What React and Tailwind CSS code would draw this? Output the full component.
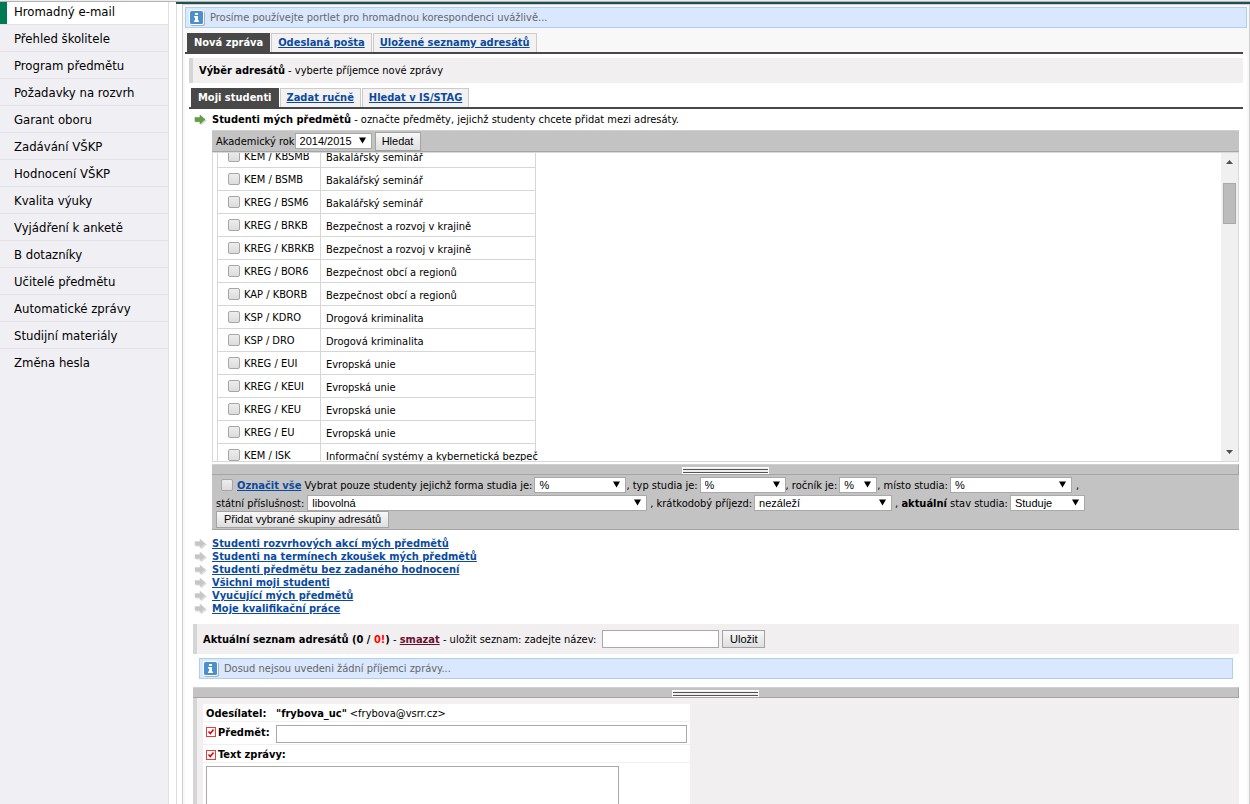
import React, { useState } from "react";

const menuItems = [
  "Hromadný e-mail",
  "Přehled školitele",
  "Program předmětu",
  "Požadavky na rozvrh",
  "Garant oboru",
  "Zadávání VŠKP",
  "Hodnocení VŠKP",
  "Kvalita výuky",
  "Vyjádření k anketě",
  "B dotazníky",
  "Učitelé předmětu",
  "Automatické zprávy",
  "Studijní materiály",
  "Změna hesla",
];

const subjects = [
  { code: "KEM / KBSMB", name: "Bakalářský seminář" },
  { code: "KEM / BSMB", name: "Bakalářský seminář" },
  { code: "KREG / BSM6", name: "Bakalářský seminář" },
  { code: "KREG / BRKB", name: "Bezpečnost a rozvoj v krajině" },
  { code: "KREG / KBRKB", name: "Bezpečnost a rozvoj v krajině" },
  { code: "KREG / BOR6", name: "Bezpečnost obcí a regionů" },
  { code: "KAP / KBORB", name: "Bezpečnost obcí a regionů" },
  { code: "KSP / KDRO", name: "Drogová kriminalita" },
  { code: "KSP / DRO", name: "Drogová kriminalita" },
  { code: "KREG / EUI", name: "Evropská unie" },
  { code: "KREG / KEUI", name: "Evropská unie" },
  { code: "KREG / KEU", name: "Evropská unie" },
  { code: "KREG / EU", name: "Evropská unie" },
  { code: "KEM / ISK", name: "Informační systémy a kybernetická bezpeč" },
];

const otherSources = [
  "Studenti rozvrhových akcí mých předmětů",
  "Studenti na termínech zkoušek mých předmětů",
  "Studenti předmětu bez zadaného hodnocení",
  "Všichni moji studenti",
  "Vyučující mých předmětů",
  "Moje kvalifikační práce",
];

const ArrowIcon = ({ active }) => (
  <svg width="14" height="12" viewBox="0 0 14 12" className="shrink-0" aria-hidden="true">
    <path d="M3 4.500h5v-2.500l6 4.500-6 5v-3H3z" fill="#dcdcdc" />
    <path
      d="M2 3.500h5v-2.500l5 4.500-5 4.500v-2.500H2z"
      fill={active ? "#64a043" : "#c6c6c6"}
      stroke={active ? "#4f8a35" : "#cfcfcf"}
      strokeWidth="0.5"
    />
  </svg>
);

const InfoIcon = () => (
  <svg width="16" height="16" viewBox="0 0 16 16" className="shrink-0" aria-hidden="true">
    <rect x="1" y="1" width="15" height="15" rx="2.5" fill="#a9b3bf" />
    <rect x="0" y="0" width="15" height="15" rx="2.5" fill="#fff" />
    <rect x="1" y="1" width="13" height="13" rx="1.5" fill="#4a8fd0" />
    <path d="M6 3h3v2H6zM5 6h4v4.500h1V12H5v-1.500h1v-3H5z" fill="#fff" />
  </svg>
);

const RequiredIcon = () => (
  <svg width="10" height="10" viewBox="0 0 10 10" className="shrink-0" aria-hidden="true">
    <rect x="0.5" y="0.5" width="9" height="9" fill="#fff" stroke="#e04040" />
    <path d="M2.500 4.500l1.800 2 3.200-4" fill="none" stroke="#e00000" strokeWidth="1.500" />
  </svg>
);

const Checkbox = (props) => (
  <input
    type="checkbox"
    className="m-0 size-3 shrink-0 appearance-none rounded-[2px] border border-[#a6a6a6] bg-linear-to-b from-[#ededed] to-[#dcdcdc] checked:from-[#4a8fd0] checked:to-[#4a8fd0]"
    {...props}
  />
);

const Select = ({ label, value, className }) => (
  <span className={`relative inline-flex h-4 ${className}`}>
    <select
      aria-label={label}
      defaultValue={value}
      className="h-4 w-full appearance-none border border-[#a9a9a9] bg-white pl-1 font-['Liberation_Sans',Arial,sans-serif] text-[11px] leading-[14px] text-black"
    >
      <option>{value}</option>
    </select>
    <svg
      width="7"
      height="7"
      viewBox="0 0 7 7"
      className="pointer-events-none absolute top-1 right-1.5"
      aria-hidden="true"
    >
      <path d="M0 0.500h7L3.500 6.500z" fill="#000" />
    </svg>
  </span>
);

const Button = ({ children, className }) => (
  <button
    type="button"
    className={`shrink-0 border border-[#a3a3a3] bg-linear-to-b from-[#f8f8f8] to-[#dedede] px-1.5 font-['Liberation_Sans',Arial,sans-serif] text-[11px] leading-none text-black ${className}`}
  >
    {children}
  </button>
);

const Tabs = ({ items }) => {
  const [active, setActive] = useState(items[0]);

  return (
    <div className="flex gap-px border-b-2 border-[#484848] pl-0.5 font-bold">
      {items.map((item) =>
        item === active ? (
          <a key={item} href="#" className="bg-[#484848] px-[7px] leading-[19px] text-white">
            {item}
          </a>
        ) : (
          <a
            key={item}
            href="#"
            onClick={() => setActive(item)}
            className="border border-b-0 border-[#cbcbcb] bg-[#f3f1f2] px-1.5 leading-[18px] text-[#0a4aa0] underline"
          >
            {item}
          </a>
        )
      )}
    </div>
  );
};

const InfoBox = ({ children }) => (
  <div className="flex h-[21px] items-center gap-[5px] border border-[#b0cfeb] bg-[#d9e8fe] pl-[3px] text-[#666]">
    <InfoIcon />
    <span>{children}</span>
  </div>
);

const Splitter = () => (
  <div className="flex h-[11px] justify-center border-t border-r border-b border-t-[#d0d0d0] border-r-[#a5a5a5] border-b-[#a5a5a5] bg-[#c3c3c3] pt-0.5">
    <div className="flex h-[7px] w-[87px] flex-col gap-0.5 border border-white bg-[#eee] pt-px">
      <div className="h-px bg-[#555]" />
      <div className="h-px bg-[#555]" />
    </div>
  </div>
);

const Sidebar = () => (
  <nav className="w-[169px] shrink-0 border-r border-[#e0e0e2] bg-[#f0eff4] text-[13px]">
    {menuItems.map((item, i) => (
      <a
        key={item}
        href="#"
        className={
          i === 0
            ? "flex h-[22px] items-center border-l-[7px] border-[#007a53] bg-white pb-1 pl-[7px] text-black"
            : "flex h-[27px] items-center border-t border-[#e2e1e6] pl-3.5 text-black"
        }
      >
        {item}
      </a>
    ))}
  </nav>
);

const SubjectTable = () => (
  <div className="flex h-[310px] border border-[#d9d9d9] bg-white">
    <div className="flex-1 overflow-hidden pl-1">
      <table className="-mt-[9px] w-[319px] table-fixed border-collapse">
        <tbody>
          {subjects.map(({ code, name }) => (
            <tr key={code} className="h-[23px]">
              <td className="w-[103px] border border-[#d6d6d6] p-0 pl-2.5">
                <label className="flex items-center gap-1">
                  <Checkbox />
                  {code}
                </label>
              </td>
              <td className="border border-[#d6d6d6] p-0 pt-0.5 pl-[5px] whitespace-nowrap">{name}</td>
            </tr>
          ))}
        </tbody>
      </table>
    </div>
    <div className="flex w-[17px] flex-col items-center justify-between bg-[#f0f0f0] py-[7px]">
      <div className="flex flex-col items-center gap-[19px]">
        <svg width="7" height="4" viewBox="0 0 7 4" aria-hidden="true">
          <path d="M0 4L3.500 0 7 4z" fill="#505050" />
        </svg>
        <div className="h-[41px] w-[13px] border border-[#a8a8a8] bg-[#bcbcbc]" />
      </div>
      <svg width="7" height="4" viewBox="0 0 7 4" aria-hidden="true">
        <path d="M0 0L3.500 4 7 0z" fill="#505050" />
      </svg>
    </div>
  </div>
);

const FilterPanel = () => (
  <div className="border-b border-[#a5a5a5] bg-[#c3c3c3] pt-0.5 pl-1 whitespace-nowrap">
    <div className="flex h-4 items-center">
      <span className="mr-[3px] flex items-center gap-1 pl-[5px]">
        <Checkbox aria-label="Označit vše" />
        <a href="#" className="font-bold text-[#0a4aa0] underline">
          Označit vše
        </a>
      </span>
      <span className="mr-0.5">Vybrat pouze studenty jejichž forma studia je:</span>
      <Select label="forma studia" value="%" className="w-[92px]" />
      <span className="mr-0.5">, typ studia je:</span>
      <Select label="typ studia" value="%" className="w-[86px]" />
      <span className="mr-0.5">, ročník je:</span>
      <Select label="ročník" value="%" className="w-[38px]" />
      <span className="mr-0.5">, místo studia:</span>
      <Select label="místo studia" value="%" className="w-[122px]" />
      <span className="ml-1">,</span>
    </div>
    <div className="mt-0.5 flex h-4 items-center">
      <span className="mr-[3px]">státní příslušnost:</span>
      <Select label="státní příslušnost" value="libovolná" className="w-[340px]" />
      <span className="mr-0.5 ml-[3px]">, krátkodobý příjezd:</span>
      <Select label="krátkodobý příjezd" value="nezáleží" className="w-[138px]" />
      <span className="mr-0.5 ml-[3px]">
        , <b>aktuální</b> stav studia:
      </span>
      <Select label="stav studia" value="Studuje" className="w-[75px]" />
    </div>
    <Button className="mb-px block h-[17px] w-[173px]">Přidat vybrané skupiny adresátů</Button>
  </div>
);

const MessageForm = () => (
  <form className="border-l-4 border-[#d5d5d5] bg-[#f1eff0] pt-1.5 pl-1.5">
    <div className="w-[487px] bg-white">
      <div className="flex h-[18px] items-center border-b border-[#f1eff0] pt-0.5 pl-[3px]">
        <b className="w-[70px]">Odesílatel:</b>
        <b className="mr-[3px]">"frybova_uc"</b>
        <span>&lt;frybova@vsrr.cz&gt;</span>
      </div>
      <div className="flex h-[23px] items-center border-b border-[#f1eff0] pt-0.5 pr-[3px] pl-[3px]">
        <label htmlFor="subject" className="flex w-[70px] items-center gap-0.5 pb-1 font-bold">
          <RequiredIcon />
          Předmět:
        </label>
        <input id="subject" type="text" className="h-[18px] flex-1 border border-[#a9a9a9] bg-white px-1" />
      </div>
      <div className="flex h-[18px] items-center border-b border-[#f1eff0] pt-0.5 pl-[3px]">
        <label htmlFor="message" className="flex items-center gap-0.5 font-bold">
          <RequiredIcon />
          Text zprávy:
        </label>
      </div>
      <div className="pt-[3px] pl-[3px]">
        <textarea id="message" className="block h-40 w-[413px] resize-none border border-[#a9a9a9] bg-white p-1" />
      </div>
    </div>
  </form>
);

const App = () => {
  return (
    <div className="flex h-screen flex-col overflow-hidden bg-white font-['DejaVu_Sans_Condensed','DejaVu_Sans',Tahoma,sans-serif] text-[11px] leading-[13px] text-black">
      <div className="h-0.5 shrink-0 border-b border-[#b4b4b4] bg-[#ececec]" />
      <div className="flex min-h-0 flex-1">
        <Sidebar />

        <main className="ml-[7px] min-w-0 flex-1 border-t-2 border-[#1b5054]">
          <div className="h-full border-l border-[#dcdcdc] pl-[5px]">
            <div className="h-full border border-b-0 border-[#cfcfcf] bg-[#f8f8f8] px-0.5 pt-0.5">
              <InfoBox>Prosíme používejte portlet pro hromadnou korespondenci uvážlivě...</InfoBox>
              <div className="mt-[5px] mr-1">
                <Tabs items={["Nová zpráva", "Odeslaná pošta", "Uložené seznamy adresátů"]} />
              </div>

              <div className="bg-white px-1 pt-1">
                <div className="flex h-[25px] items-center border-l-4 border-[#d5d5d5] bg-[#f1eff0] pl-1.5">
                  <span>
                    <b>Výběr adresátů</b> - vyberte příjemce nové zprávy
                  </span>
                </div>
                <div className="mt-[5px]">
                  <Tabs items={["Moji studenti", "Zadat ručně", "Hledat v IS/STAG"]} />
                </div>

                <div className="mx-1">
                  <div className="flex h-[21px] items-center gap-[5px]">
                    <ArrowIcon active />
                    <span>
                      <b>Studenti mých předmětů</b> - označte předměty, jejichž studenty chcete přidat mezi adresáty.
                    </span>
                  </div>

                  <div className="ml-[19px]">
                    <div className="flex h-[22px] items-center border-t border-b border-t-[#d0d0d0] border-b-[#a5a5a5] bg-[#c3c3c3] pl-1">
                      <span>Akademický rok</span>
                      <Select label="Akademický rok" value="2014/2015" className="mr-[3px] w-[77px]" />
                      <Button className="h-[19px] w-[46px]">Hledat</Button>
                    </div>
                    <SubjectTable />
                    <div className="mt-0.5">
                      <Splitter />
                    </div>
                    <FilterPanel />
                  </div>

                  <ul className="mt-[7px]">
                    {otherSources.map((source) => (
                      <li key={source} className="flex h-[13px] items-center gap-[5px]">
                        <ArrowIcon />
                        <a href="#" className="font-bold text-[#0a4aa0] underline">
                          {source}
                        </a>
                      </li>
                    ))}
                  </ul>

                  <div className="mt-[9px] flex h-[30px] items-center border-l-4 border-[#d5d5d5] bg-[#f1eff0] pl-1.5 whitespace-nowrap">
                    <label htmlFor="listName" className="mr-1.5">
                      <b>
                        Aktuální seznam adresátů (0 / <span className="text-[#ff0000]">0!</span>)
                      </b>{" "}
                      -{" "}
                      <a href="#" className="font-bold text-[#6d0f2f] underline">
                        smazat
                      </a>{" "}
                      - uložit seznam: zadejte název:
                    </label>
                    <input
                      id="listName"
                      type="text"
                      className="mr-[3px] h-[18px] w-[117px] border border-[#a9a9a9] bg-white px-1"
                    />
                    <Button className="h-[18px] w-[43px]">Uložit</Button>
                  </div>

                  <div className="mx-1.5 mt-1 mb-2">
                    <InfoBox>Dosud nejsou uvedeni žádní příjemci zprávy...</InfoBox>
                  </div>

                  <Splitter />
                  <MessageForm />
                </div>
              </div>
            </div>
          </div>
        </main>
      </div>
    </div>
  );
};

export default App;
